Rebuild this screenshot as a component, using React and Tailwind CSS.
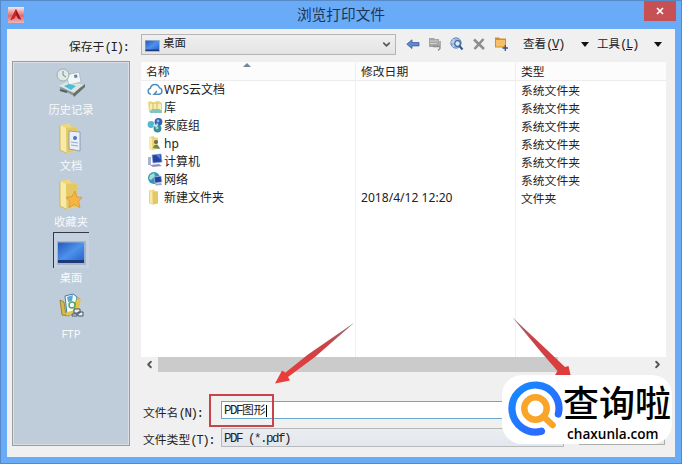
import { ChevronDown, ChevronLeft, ChevronRight } from 'lucide-react';

const FolderIcon = ({ className = 'w-4 h-4', children }) => (
    <svg viewBox="0 0 32 32" className={className}>
        <path d="M5 3l10-2v3l7 1v24l-9 2-8-3z" fill="#edd67c" />
        <path d="M5 3l6 3v25l-6-3z" fill="#f8eba9" />
        <path d="M11 6l11-1v23l-10 3z" fill="#e4c864" />
        <path d="M5 3v25l6 3" fill="none" stroke="#c8ad58" strokeWidth="0.8" />
        {children}
    </svg>
);

const HistoryIcon = () => (
    <svg viewBox="0 0 32 32" className="w-8 h-8">
        <path d="M4 22l9-5 15 4-9 9z" fill="#8d9694" />
        <path d="M4 20l9-5 15 4-9 8z" fill="#dce5e4" />
        <path d="M18 28l12-10v3L19 31z" fill="#68706c" />
        <path d="M11 9l13-3 2 10-12 3z" fill="#f2f6f6" stroke="#a8b2b6" strokeWidth="0.7" />
        <path d="M19 9l3-.6.5 3-3 .6z" fill="#5d82ae" />
        <circle cx="8" cy="9" r="6" fill="#dfe9e6" stroke="#a0aeb0" />
        <path d="M8 5v4l3 2" fill="none" stroke="#77888e" />
        <path d="M9 20l5-2 7 2-5 4z" fill="#49bed6" />
        <path d="M5 24l7 2" stroke="#47646f" strokeWidth="2" />
    </svg>
);

const DocumentsIcon = () => (
    <FolderIcon className="w-8 h-8">
        <path d="M14 9l11 1v19l-11-2z" fill="#e9eff8" stroke="#8291ae" strokeWidth="0.8" />
        <circle cx="20" cy="16" r="2" fill="#4a79c4" />
        <path d="M16 20l7 1M16 23l7 1" stroke="#9aa9c8" />
    </FolderIcon>
);

const FavoritesIcon = () => (
    <FolderIcon className="w-8 h-8">
        <path d="M20 13l2 6 5 .5-3.500 4 1.500 6-6-3-5 3 1-6-4-4 6-1z" fill="#f5b542" stroke="#d9902c" strokeWidth="0.7" />
    </FolderIcon>
);

const ScreenIcon = ({ className }) => (
    <svg viewBox="0 0 30 24" preserveAspectRatio="none" className={className}>
        <defs>
            <linearGradient id="screen" x1="0" y1="0" x2="1" y2="1">
                <stop offset="0" stopColor="#2459b8" />
                <stop offset="0.5" stopColor="#4d91ed" />
                <stop offset="1" stopColor="#2760c9" />
            </linearGradient>
        </defs>
        <path d="M0 0h30v24H0z" fill="#a5b6cb" />
        <path d="M1 1.500h27v20H1z" fill="url(#screen)" />
        <path d="M1 19h27v3H1z" fill="#1d3977" />
    </svg>
);

const FtpIcon = () => (
    <svg viewBox="0 0 32 32" className="w-8 h-8">
        <path d="M5 10l4 2 2 13 11-3 3-13-5-2-6 19-7-1z" fill="#d7b746" stroke="#8a7932" strokeWidth="0.8" />
        <path d="M10 6l8-2 4 3-3 14-7 3z" fill="#f5fbff" stroke="#4380a8" />
        <path d="M12 7l6-2-1 6-4 1z" fill="#5ba8d2" />
        <path d="M22 8l4 1-3 13-11 4-2-3 9-3z" fill="#e3c44d" />
        <circle cx="17" cy="15" r="3" fill="none" stroke="#58a65b" strokeWidth="1.500" />
        <path d="M19 19h6v4h-6zM23 22h5v4h-5zM17 24h5v2h-5z" fill="#e8eef5" stroke="#33455c" strokeWidth="0.9" />
    </svg>
);

const CloudIcon = () => (
    <svg viewBox="0 0 16 16" className="w-4 h-4">
        <path d="M4 13.200a3 3 0 0 1-.6-5.900 4.600 4.600 0 0 1 9-.4 3.200 3.200 0 0 1-.2 6.300H7l3-3.200" fill="none" stroke="#4f8cc4" strokeWidth="1.400" />
    </svg>
);

const LibraryIcon = () => (
    <svg viewBox="0 0 16 16" className="w-4 h-4">
        <path d="M1 3l3-1 1 1h3l1-1h3l1 1 2 1v9H2z" fill="#ead77d" />
        <path d="M3 5h11v7H3z" fill="#f6edb1" />
        <path d="M3 12l2-2h7l3 2v2H3z" fill="#83c6bb" />
        <path d="M6 4v6M10 4v6" stroke="#d3bd65" />
    </svg>
);

const HomeGroupIcon = () => (
    <svg viewBox="0 0 16 16" className="w-4 h-4">
        <circle cx="4" cy="7.500" r="3.400" fill="#54b7cf" />
        <circle cx="11.500" cy="4.800" r="3.900" fill="#3460b0" />
        <circle cx="10.500" cy="11.500" r="3.900" fill="#3a8e9b" />
        <path d="M6.500 8l3 1.500 1-3" fill="none" stroke="#cbeff3" strokeWidth="1.500" />
        <circle cx="11" cy="4" r="1.400" fill="#8fb3e8" />
        <circle cx="10" cy="11" r="1.400" fill="#8fdcc2" />
    </svg>
);

const UserIcon = () => (
    <svg viewBox="0 0 16 16" className="w-4 h-4">
        <path d="M2 2l5-1v1l4 1v11l-6 1-3-1z" fill="#ecd67c" />
        <path d="M2 2l3 1v12l-3-1z" fill="#f9eba8" />
        <circle cx="9" cy="7" r="2" fill="#6b6a46" />
        <path d="M6 13c1-5 6-4 7 1z" fill="#668a5a" />
    </svg>
);

const ComputerIcon = () => (
    <svg viewBox="0 0 16 16" className="w-4 h-4">
        <path d="M5 2l9-1 1 8-9 1z" fill="#2447a4" stroke="#8d9ccb" strokeWidth="0.7" />
        <path d="M9 2l4-.4.700 5z" fill="#5683dd" />
        <path d="M1 4h3v8H1z" fill="#aab2d3" />
        <path d="M3 12l9-1 3 2-9 1z" fill="#8b93b6" />
    </svg>
);

const NetworkIcon = () => (
    <svg viewBox="0 0 16 16" className="w-4 h-4">
        <circle cx="7" cy="7" r="6" fill="#3596b8" />
        <path d="M3 4l4-2 1 3-4 4-2-1z" fill="#9ae1d4" />
        <path d="M7 6l7-1 1 6-7 1z" fill="#2344a0" stroke="#b9c6e4" strokeWidth="0.7" />
        <path d="M8 13l6-1 1 2-6 .5z" fill="#9ba6c4" />
    </svg>
);

const AppIcon = () => (
    <svg viewBox="0 0 16 16" className="w-4 h-4">
        <defs>
            <linearGradient id="app" x1="0" y1="0" x2="0" y2="1">
                <stop offset="0" stopColor="#f5e9ea" />
                <stop offset="0.55" stopColor="#df6b70" />
                <stop offset="1" stopColor="#edb5b8" />
            </linearGradient>
        </defs>
        <path d="M0 0h16v16H0z" fill="url(#app)" />
        <path d="M8 2l5.500 11-3.500-1.500L8 8l-2 3.500L2.500 13z" fill="#aa1218" />
        <path d="M8 2v6l-2 3.500L2.500 13z" fill="#cf2329" />
    </svg>
);

const BackIcon = () => (
    <svg viewBox="0 0 14 14" className="w-3.5 h-3.5">
        <path d="M.8 7.200L6 2.800v2.700h7v3.400H6v2.700z" fill="#5f86d0" stroke="#3f5fa3" strokeWidth="0.8" />
    </svg>
);

const UpIcon = () => (
    <svg viewBox="0 0 14 14" className="w-3.5 h-3.5">
        <path d="M1 1h5l1 1h4v8H1z" fill="#a5a5a5" />
        <path d="M2 4h8M2 6.500h7" stroke="#d0d0d0" />
        <path d="M5 9.500h7v2l-2 2M12 4v6" fill="none" stroke="#8c8c8c" strokeWidth="1.300" />
    </svg>
);

const SearchWebIcon = () => (
    <svg viewBox="0 0 14 14" className="w-3.5 h-3.5">
        <circle cx="6" cy="6" r="5.200" fill="#9cb8dc" stroke="#6b8dbf" />
        <path d="M1 5h9M3 2c2 3 2 5 0 8" fill="none" stroke="#d9e7f7" />
        <circle cx="7.500" cy="6.500" r="2.800" fill="#dcebfa" stroke="#3d659f" strokeWidth="1.200" />
        <path d="M9.500 9l3 3.500" stroke="#315893" strokeWidth="2" />
    </svg>
);

const DeleteIcon = () => (
    <svg viewBox="0 0 14 14" className="w-3.5 h-3.5">
        <path d="M2 2.500l10 9.500M11.500 2L2.500 12" stroke="#8f8c91" strokeWidth="2.600" />
    </svg>
);

const NewFolderIcon = () => (
    <svg viewBox="0 0 14 14" className="w-3.5 h-3.5">
        <path d="M1 .5h4l1 1h6v9H1z" fill="#d58b2e" />
        <path d="M2 3h9v6.500H2z" fill="#f5c067" />
        <path d="M11.300 8v6M8.500 11h5.500" stroke="#334f8c" strokeWidth="1.300" />
    </svg>
);

const places = [
    { label: '历史记录', icon: <HistoryIcon /> },
    { label: '文档', icon: <DocumentsIcon /> },
    { label: '收藏夹', icon: <FavoritesIcon /> },
    { label: '桌面', icon: <ScreenIcon className="w-[29px] h-6 mt-1" />, selected: true },
    { label: 'FTP', icon: <FtpIcon /> },
];

const files = [
    { name: 'WPS云文档', icon: <CloudIcon />, date: '', type: '系统文件夹' },
    { name: '库', icon: <LibraryIcon />, date: '', type: '系统文件夹' },
    { name: '家庭组', icon: <HomeGroupIcon />, date: '', type: '系统文件夹' },
    { name: 'hp', icon: <UserIcon />, date: '', type: '系统文件夹' },
    { name: '计算机', icon: <ComputerIcon />, date: '', type: '系统文件夹' },
    { name: '网络', icon: <NetworkIcon />, date: '', type: '系统文件夹' },
    { name: '新建文件夹', icon: <FolderIcon className="w-4 h-4" />, date: '2018/4/12 12:20', type: '文件夹' },
];

// Half-width text next to the Chinese labels, 6px per character
const Half = ({ children }) => (
    <span className="font-['Liberation_Mono','Noto_Sans_CJK_SC',monospace] text-[12.5px] tracking-[-1.5px] whitespace-pre">{children}</span>
);

const TitleBar = () => (
    <div className="flex h-[28px] shrink-0 items-start">
        <div className="w-[200px] pl-[7px] pt-1.5">
            <AppIcon />
        </div>
        <h1 className="flex-1 pt-[3px] pl-[6px] text-center text-[14.7px] leading-[20px] text-[#1d3555]">浏览打印文件</h1>
        <div className="flex w-[206px] justify-end pr-[5px]">
            <button className="flex h-5 w-8 items-center justify-center bg-[#c75054]">
                <svg viewBox="0 0 8 8" className="h-2 w-2">
                    <path d="M1 1l6 6M7 1L1 7" stroke="#fff" strokeWidth="1.700" />
                </svg>
            </button>
        </div>
    </div>
);

const Toolbar = () => (
    <div className="flex h-[32px] items-start pt-[5px] text-[12px] text-[#222]">
        <div className="w-[134px] pl-[62px] pt-[4px] leading-[16px] whitespace-nowrap text-[11.8px]">
            保存于<Half>(I):</Half>
        </div>
        <div className="flex h-[21px] w-[255px] items-center border border-[#b5b5b5] bg-linear-to-b from-[#efefef] to-[#e4e4e4] pl-[3px] pr-[3px]">
            <ScreenIcon className="w-[15px] h-3 mt-0.5" />
            <span className="ml-[3px] -mt-1 flex-1 text-[11.5px] leading-4">桌面</span>
            <ChevronDown size={11} strokeWidth={3.5} color="#555" />
        </div>
        <div className="ml-[10px] mt-[3px] flex gap-2">
            <BackIcon />
            <UpIcon />
            <SearchWebIcon />
            <DeleteIcon />
            <NewFolderIcon />
        </div>
        <div className="ml-[15px] flex items-center pt-[1px] leading-[18px] text-[11.5px]">
            <span className="w-[58px]">查看<Half>(<u>V</u>)</Half></span>
            <span className="h-0 w-0 border-x-[4px] border-t-[5px] border-x-transparent border-t-[#111]" />
            <span className="ml-[8px] w-[57px]">工具<Half>(<u>L</u>)</Half></span>
            <span className="h-0 w-0 border-x-[4px] border-t-[5px] border-x-transparent border-t-[#111]" />
        </div>
    </div>
);

const PlacesBar = () => (
    <div className="flex h-[385px] w-[118px] shrink-0 flex-col items-center border border-[#9b9d9c] bg-[#bfccda] pt-[2px] shadow-[inset_1px_1px_0_#d9dfe5,inset_-1px_-1px_0_#d9dfe5]">
        {places.map(place => (
            <div key={place.label} className="flex h-14 flex-col items-center">
                <div className={`flex h-9 w-9 items-center justify-center ${place.selected ? 'border-l border-t border-[#303a48] bg-[#c5d1de]' : ''}`}>
                    {place.icon}
                </div>
                <span className="pt-px text-[11.3px] leading-[17px] text-[#f7fafc]">{place.label}</span>
            </div>
        ))}
    </div>
);

const FileList = () => (
    <div className="flex h-[310px] w-[525px] flex-col">
        <div className="flex h-[295px] flex-col bg-white text-[11.8px] text-[#222]">
            <div className="grid h-[19px] grid-cols-[214px_160px_1fr] border-b border-[#ededed] bg-[#fcfcfc] leading-[18px]">
                <div className="flex justify-between pl-[5px]">
                    <span>名称</span>
                    <svg viewBox="0 0 8 4" className="mr-[104px] mt-px h-1 w-2">
                        <path d="M0 4l4-4 4 4z" fill="#71879a" />
                    </svg>
                </div>
                <div className="border-l border-[#eee] pl-[5px]">修改日期</div>
                <div className="border-l border-[#eee] pl-[5px]">类型</div>
            </div>
            {files.map(file => (
                <div key={file.name} className="grid h-[18px] shrink-0 grid-cols-[214px_160px_1fr] leading-[18px]">
                    <div className="flex items-start pl-[6px]">
                        {file.icon}
                        <span className="ml-[1px] text-[12px]">{file.name}</span>
                    </div>
                    <div className="border-l border-[#f1f1f1] pl-[5px] text-[12.1px]">{file.date}</div>
                    <div className="border-l border-[#f1f1f1] pl-[5px]">{file.type}</div>
                </div>
            ))}
            <div className="grid flex-1 grid-cols-[214px_160px_1fr]">
                <div />
                <div className="border-l border-[#f1f1f1]" />
                <div className="border-l border-[#f1f1f1]" />
            </div>
        </div>
        <div className="flex h-[15px] items-center bg-[#f0f0f0]">
            <div className="flex w-[17px] justify-center"><ChevronLeft size={11} strokeWidth={4} color="#555" /></div>
            <div className="h-[15px] w-[400px] bg-[#cbcbcb]" />
            <div className="flex-1" />
            <div className="flex w-[17px] justify-center"><ChevronRight size={11} strokeWidth={4} color="#555" /></div>
        </div>
    </div>
);

const FileForm = () => (
    <div className="flex pt-[29px] text-[11.8px] text-[#222]">
        <div className="w-[423px]">
            <div className="flex h-[27px]">
                <div className="w-[80px] pl-[2px] pt-[3px] leading-[16px] whitespace-nowrap">文件名<Half>(N):</Half></div>
                <div className="h-[18px] w-[343px] border border-[#6aa9cb] bg-white pl-[2px] leading-[14px]">
                    <Half>PDF</Half>图形<span className="inline-block h-3 w-px bg-black align-middle" />
                </div>
            </div>
            <div className="flex h-[19px]">
                <div className="w-[80px] pl-[2px] pt-[3px] leading-[16px] whitespace-nowrap">文件类型<Half>(T):</Half></div>
                <div className="h-[19px] w-[343px] border border-[#b6b8ba] bg-linear-to-b from-[#ebedf0] to-[#e3e7ee] pl-[2px] leading-[16px]">
                    <Half>PDF (*.pdf)</Half>
                </div>
            </div>
        </div>
        <div className="ml-[15px] flex flex-col gap-[7px]">
            <div className="h-[19px] w-[86px] border border-[#adadad] bg-[#e8e8e8]" />
            <div className="h-[18px] w-[86px] border border-[#adadad] bg-[#e8e8e8]" />
        </div>
    </div>
);

// Red arrows and frame laid over the dialog
const Annotations = () => (
    <>
        <svg viewBox="0 0 682 464" className="pointer-events-none absolute -left-px -top-px h-[464px] w-[682px]">
            <defs>
                <linearGradient id="leftArrow" x1="355" y1="322" x2="276" y2="384" gradientUnits="userSpaceOnUse">
                    <stop offset="0" stopColor="#8d7278" />
                    <stop offset="0.35" stopColor="#c84349" />
                    <stop offset="1" stopColor="#ee3d37" />
                </linearGradient>
                <linearGradient id="rightArrow" x1="512" y1="317" x2="570" y2="378" gradientUnits="userSpaceOnUse">
                    <stop offset="0" stopColor="#8d7278" />
                    <stop offset="0.35" stopColor="#c84349" />
                    <stop offset="1" stopColor="#e23b3b" />
                </linearGradient>
            </defs>
            <path d="M354.500 322.500L308 354.500L285.500 372.500L282 370.500L275 383.500L290 380.500L288 377L315 357Z" fill="url(#leftArrow)" />
            <path d="M512.500 317.500L541 352L557.500 371L555 375L572 381L568.500 366L565 367L545 348Z" fill="url(#rightArrow)" />
        </svg>
        <div className="absolute left-[208px] top-[393px] h-[33px] w-[65px] border-2 border-[#c94449]" />
    </>
);

const Watermark = () => (
    <div className="absolute left-[501px] top-[374px] flex h-[69px] w-[170px] rounded-[20px] bg-white">
        <svg viewBox="0 0 62 68" className="-mr-px h-[68px] w-[62px] shrink-0">
            <defs>
                <linearGradient id="ring" x1="0" y1="0" x2="1" y2="1">
                    <stop offset="0" stopColor="#168bff" />
                    <stop offset="1" stopColor="#2f62ff" />
                </linearGradient>
            </defs>
            <path d="M56.300 39A23.500 23.500 0 1 0 39.500 56.200" fill="none" stroke="url(#ring)" strokeWidth="7.200" strokeLinecap="round" />
            <circle cx="33.500" cy="33.500" r="11.200" fill="none" stroke="#f9a529" strokeWidth="6.500" />
            <path d="M41.500 41.500L50.500 50" stroke="#f9a529" strokeWidth="6.500" strokeLinecap="round" />
        </svg>
        <div className="flex flex-col pt-[9px] text-black">
            <span className="font-['Liberation_Sans','Noto_Sans_CJK_SC',sans-serif] text-[36px] font-medium leading-[42px] whitespace-nowrap">查询啦</span>
            <span className="pl-[4px] font-['Open_Sans',sans-serif] text-[13.6px] font-semibold leading-[16px]">chaxunla.com</span>
        </div>
    </div>
);

const App = () => {
    return (
        <div className="relative flex h-[464px] w-[682px] flex-col overflow-hidden border border-[#5589c8] bg-[#6aabf8] font-['Noto_Sans','Noto_Sans_CJK_SC',sans-serif]">
            <TitleBar />
            <div className="mx-[6px] h-[428px] bg-[#f0f0f0]">
                <Toolbar />
                <div className="flex pl-[5px]">
                    <PlacesBar />
                    <div className="ml-[11px] pt-px">
                        <FileList />
                        <FileForm />
                    </div>
                </div>
            </div>
            <Annotations />
            <Watermark />
        </div>
    );
};

export default App;
